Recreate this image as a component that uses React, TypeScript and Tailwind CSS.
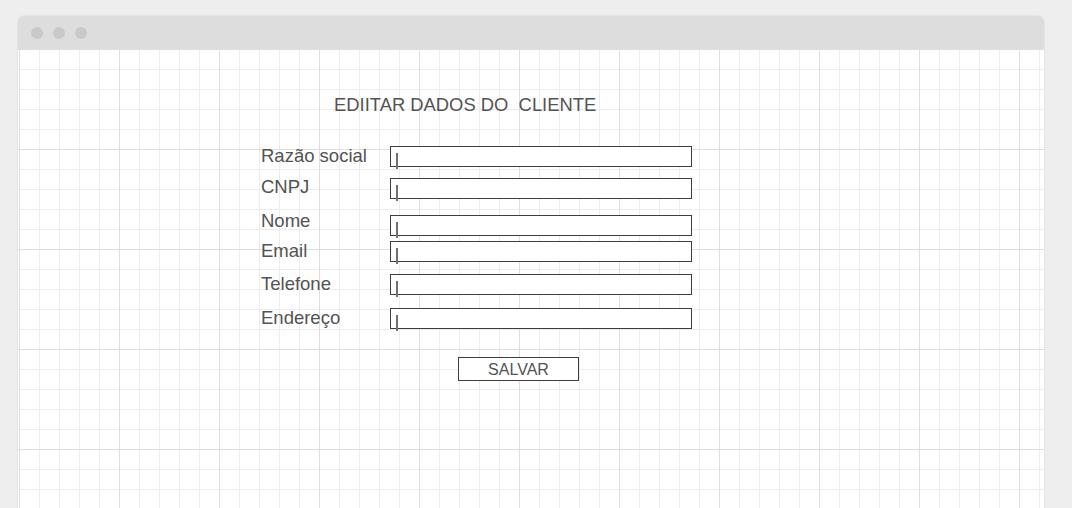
const fields = [
  { label: "Razão social", gap: "mt-0", labelOffset: "mt-[1px]" },
  { label: "CNPJ", gap: "mt-[11px]", labelOffset: "mt-0" },
  { label: "Nome", gap: "mt-[16px]", labelOffset: "-mt-[3px]" },
  { label: "Email", gap: "mt-[5px]", labelOffset: "mt-[1px]" },
  { label: "Telefone", gap: "mt-[12px]", labelOffset: "mt-[1px]" },
  { label: "Endereço", gap: "mt-[13px]", labelOffset: "mt-[1px]" },
];

const FieldRow = ({ label, gap, labelOffset }: { label: string; gap: string; labelOffset: string }) => (
  <div className={`flex items-start ${gap}`}>
    <div className={`w-[129px] text-[18.5px] leading-[18px] text-[#535353] ${labelOffset}`}>{label}</div>
    <div className="relative h-[21px] w-[302px] border border-[#3d3d3d] bg-white">
      {/* text cursor */}
      <div className="absolute left-[5px] top-[6px] h-[16px] w-[2px] bg-[#707070]" />
    </div>
  </div>
);

export default function App() {
  return (
    <div className="h-[508px] overflow-hidden bg-[#eeeeee] pl-[18px] pt-[16px] font-['Liberation_Sans',Arial,sans-serif]">
      <div className="w-[1026px] overflow-hidden rounded-t-[6px] shadow-[0_0_2px_rgba(0,0,0,0.12)]">
        {/* title bar */}
        <div className="flex h-[33px] items-center gap-[10px] bg-[#dddddd] pl-[13px]">
          <span className="h-[12px] w-[12px] rounded-full bg-[#c9c9c9]" />
          <span className="h-[12px] w-[12px] rounded-full bg-[#c9c9c9]" />
          <span className="h-[12px] w-[12px] rounded-full bg-[#c9c9c9]" />
        </div>

        {/* canvas */}
        <div className="h-[470px] bg-white [background-image:linear-gradient(to_right,#dedede_1px,transparent_1px),linear-gradient(to_bottom,#dedede_1px,transparent_1px),linear-gradient(to_right,#ececec_1px,transparent_1px),linear-gradient(to_bottom,#ececec_1px,transparent_1px)] [background-size:100px_100px,100px_100px,20px_20px,20px_20px] [background-position:1px_0,1px_0,1px_0,1px_0]">
          <div className="ml-[316px] pt-[47px] text-[18.4px] leading-[18px] text-[#535353] whitespace-pre">
            EDIITAR DADOS DO  CLIENTE
          </div>

          <div className="ml-[243px] mt-[32px] flex flex-col">
            {fields.map((f) => (
              <FieldRow key={f.label} {...f} />
            ))}

            <button className="ml-[197px] mt-[28px] h-[24px] w-[121px] border border-[#3d3d3d] bg-white pt-[1px] text-[16px] leading-[22px] text-[#535353]">
              SALVAR
            </button>
          </div>
        </div>
      </div>
    </div>
  );
}
